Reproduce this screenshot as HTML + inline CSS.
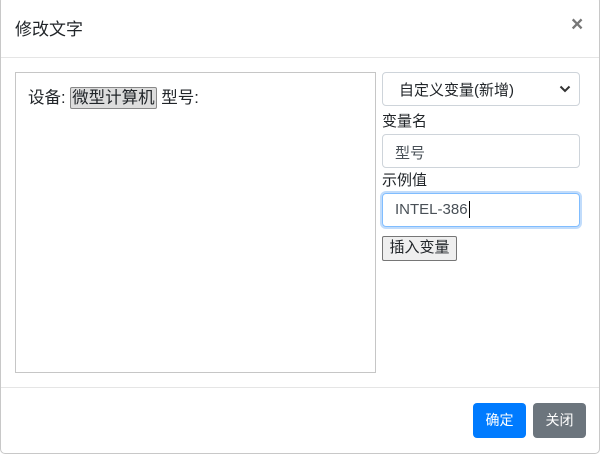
<!DOCTYPE html>
<html><head><meta charset="utf-8"><style>
*{box-sizing:border-box}
body{margin:0;width:601px;height:455px;background:#fff;font-family:"Liberation Sans","Noto Sans CJK SC",sans-serif;color:#212529;position:relative;overflow:hidden}
.modal{position:absolute;left:0;top:-4px;width:600px;height:458px;border:1px solid #c8c8c8;border-radius:5px;background:#fff}
.hdr{position:absolute;left:0;top:0;right:0;height:61px;border-bottom:1px solid #e5e5e5}
.title{position:absolute;left:14px;top:18px;font-size:17px}
.close{position:absolute;left:570px;top:16px;font-size:21px;font-weight:bold;color:#777}
.box{position:absolute;left:14px;top:75px;width:361px;height:301px;border:1px solid #c6c6c6}
.line{position:absolute;left:12px;top:11px;font-size:16.5px;white-space:nowrap}
.tag{display:inline-block;background:#ddd;border:1px solid #888;border-radius:2px;padding:0 1px;line-height:20px}
.sel{position:absolute;left:381px;top:75px;width:198px;height:34px;border:1px solid #ced4da;border-radius:4px;font-size:15px;padding:6px 16px}
.sel svg{position:absolute;right:8px;top:12px}
.lbl{position:absolute;left:381px;font-size:15px}
.inp{position:absolute;left:381px;width:198px;height:34px;border:1px solid #ced4da;border-radius:4px;font-size:15px;padding:7px 12px;color:#495057}
.focus{border-color:#80bdff;box-shadow:0 0 0 2px #c1dcfb}
.btn{position:absolute;left:381px;top:239px;width:75px;height:25px;border:1px solid #767676;border-radius:2px;background:#efefef;font-size:15px;text-align:center;line-height:22px}
.ftr{position:absolute;left:0;top:390px;right:0;border-top:1px solid #e5e5e5}
.b{position:absolute;top:406px;height:35px;width:53px;border-radius:4px;color:#fff;font-size:14px;text-align:center;line-height:35px}
</style></head><body>
<div class="modal">
<div class="hdr"><div class="title">修改文字</div><div class="close">×</div></div>
<div class="box"><div class="line">设备: <span class="tag">微型计算机</span> 型号:</div></div>
<div class="sel">自定义变量(新增)<svg width="12" height="8" viewBox="0 0 12 8"><path d="M1.5 1.5 L6 6 L10.5 1.5" fill="none" stroke="#333" stroke-width="2"/></svg></div>
<div class="lbl" style="top:113px">变量名</div>
<div class="inp" style="top:137px">型号</div>
<div class="lbl" style="top:172px">示例值</div>
<div class="inp focus" style="top:196px">INTEL-386<span style="border-left:1.5px solid #000;margin-left:1px"></span></div>
<div class="btn">插入变量</div>
<div class="ftr"></div>
<div class="b" style="left:472px;background:#007bff">确定</div>
<div class="b" style="left:532px;background:#6c757d">关闭</div>
</div>
</body></html>
